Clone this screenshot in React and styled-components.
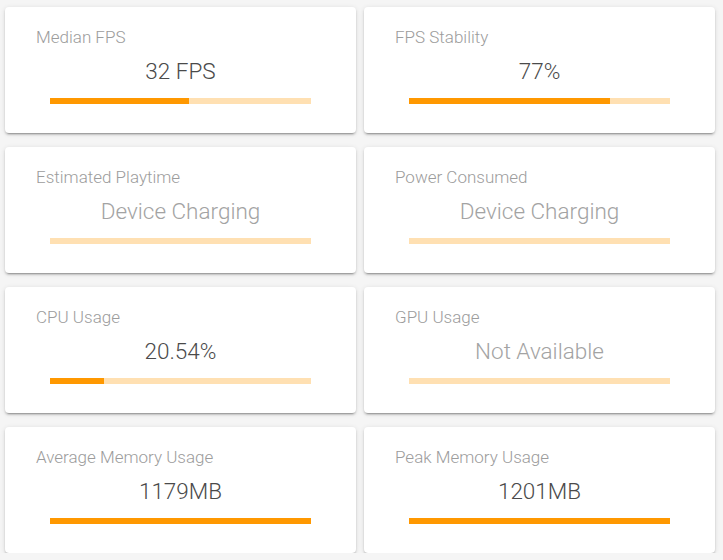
import styled, { createGlobalStyle } from 'styled-components';

const GlobalStyle = createGlobalStyle`
  body {
    margin: 0;
    background-color: #f5f5f5;
    font-family: "Roboto Light", Roboto, "Liberation Sans", sans-serif;
  }
`;

const Grid = styled.div`
  display: grid;
  grid-template-columns: 351px 351px;
  column-gap: 8px;
  row-gap: 14px;
  padding: 7px 0 0 5px;
`;

const Card = styled.div`
  height: 126px;
  box-sizing: border-box;
  padding: 20px 31px 0;
  background-color: #fff;
  border-radius: 4px;
  box-shadow: 0px 3px 1px -2px rgba(0, 0, 0, 0.2),
    0px 2px 2px 0px rgba(0, 0, 0, 0.14), 0px 1px 5px 0px rgba(0, 0, 0, 0.12);
`;

const Label = styled.div`
  font-size: 17px;
  line-height: 20px;
  font-weight: 300;
  color: #9c9c9c;
`;

const Value = styled.div`
  margin-top: 11px;
  font-size: 22.5px;
  line-height: 26px;
  font-weight: 300;
  text-align: center;
  color: ${({ $muted }) => ($muted ? '#a3a3a3' : '#4a4a4a')};
`;

const Track = styled.div`
  margin: 14px 14px 0;
  height: 6px;
  background-color: #ffe0b2;
  overflow: hidden;
`;

const Fill = styled.div`
  height: 100%;
  background-color: #ff9800;
`;

const stats = [
  { label: 'Median FPS', value: '32 FPS', progress: 32 / 60 },
  { label: 'FPS Stability', value: '77%', progress: 0.77 },
  { label: 'Estimated Playtime', value: 'Device Charging', progress: 0, muted: true },
  { label: 'Power Consumed', value: 'Device Charging', progress: 0, muted: true },
  { label: 'CPU Usage', value: '20.54%', progress: 0.2054 },
  { label: 'GPU Usage', value: 'Not Available', progress: 0, muted: true },
  { label: 'Average Memory Usage', value: '1179MB', progress: 1 },
  { label: 'Peak Memory Usage', value: '1201MB', progress: 1 },
];

const StatCard = ({ stat: { label, value, progress, muted } }) => (
  <Card>
    <Label>{label}</Label>
    <Value $muted={muted}>{value}</Value>
    <Track>
      <Fill style={{ width: `${progress * 100}%` }} />
    </Track>
  </Card>
);

export default function App() {
  return (
    <>
      <GlobalStyle />
      <Grid>
        {stats.map((stat) => (
          <StatCard key={stat.label} stat={stat} />
        ))}
      </Grid>
    </>
  );
}
